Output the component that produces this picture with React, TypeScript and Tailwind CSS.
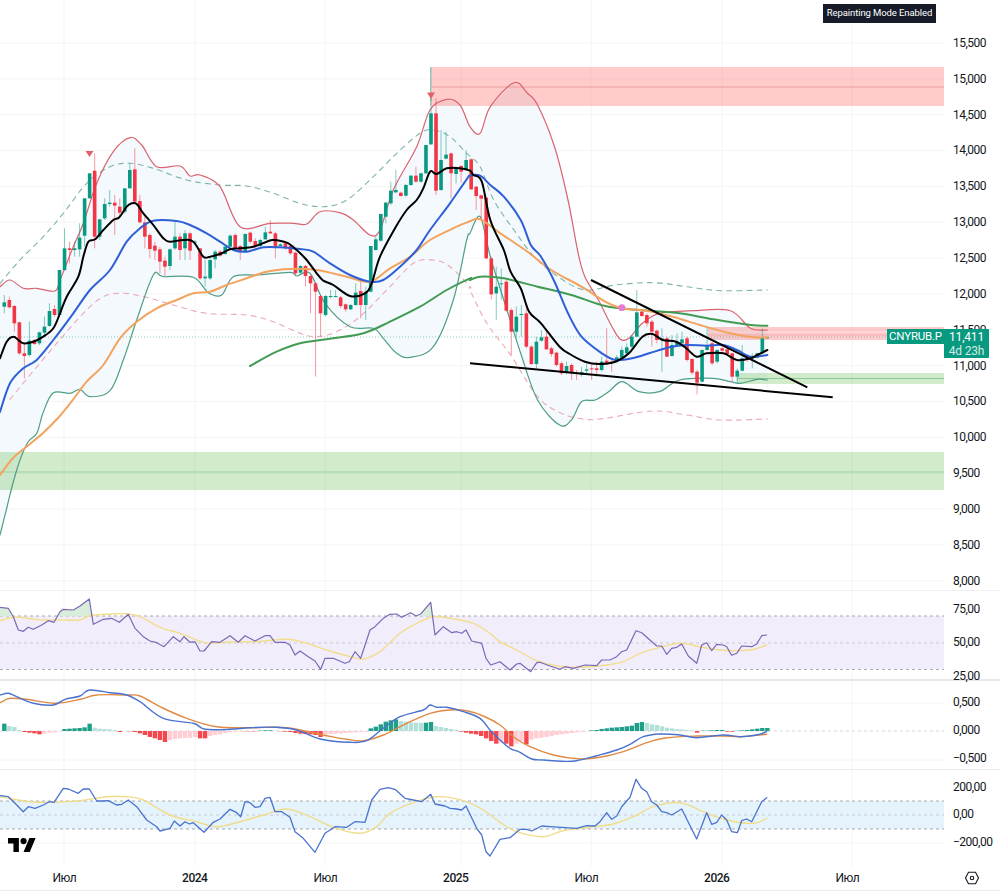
import React from "react";

type P = [number, number];
const flat = (a: number[]): P[] => {
  const r: P[] = [];
  for (let i = 0; i < a.length; i += 2) r.push([a[i], a[i + 1]]);
  return r;
};
// main pane: crop-based coordinates converted to page pixels
const z1 = (a: number[]): P[] => flat(a).map(([x, y]) => [x / 3, 60 + y / 3]);
const z2 = (a: number[]): P[] => flat(a).map(([x, y]) => [470 + x * 0.338, 60 + y / 3]);
// lower panes
const z3 = (a: number[]): P[] => flat(a).map(([x, y]) => [x / 3, 590 + y / 3]);
const z4 = (a: number[]): P[] => flat(a).map(([x, y]) => [500 + x / 3, 590 + y / 3]);
const pts = (p: P[]) => p.map(([x, y]) => `${x.toFixed(1)},${y.toFixed(1)}`).join(" ");
// smooth curve through the points (Catmull-Rom)
const curve = (p: P[]) => {
  let d = `M${p[0][0].toFixed(1)} ${p[0][1].toFixed(1)}`;
  for (let i = 0; i < p.length - 1; i++) {
    const a = p[Math.max(0, i - 1)], b = p[i], c = p[i + 1], e = p[Math.min(p.length - 1, i + 2)];
    const c1x = b[0] + (c[0] - a[0]) / 6, c1y = b[1] + (c[1] - a[1]) / 6;
    const c2x = c[0] - (e[0] - b[0]) / 6, c2y = c[1] - (e[1] - b[1]) / 6;
    d += `C${c1x.toFixed(1)} ${c1y.toFixed(1)} ${c2x.toFixed(1)} ${c2y.toFixed(1)} ${c[0].toFixed(1)} ${c[1].toFixed(1)}`;
  }
  return d;
};

const black = [...z1([0,895,20,845,40,830,55,840,70,850,100,845,130,830,160,805,180,760,200,710,235,650,250,590,265,545,285,538,310,510,340,480,358,472,380,440,395,430,410,432,430,460,460,495,490,535,510,545,550,540,580,545,610,590,630,590,660,582,690,568,720,565,760,560,800,545,820,540,860,548,890,570,920,600,950,640,970,662,1000,675,1050,708,1095,700,1115,670,1140,590,1185,505,1220,450,1250,420,1270,385,1290,335,1310,342,1340,325,1380,325,1410,332]), ...z2([10,345,35,365,60,480,100,570,120,635,150,685,175,755,210,790,265,860,300,885,340,905,380,912,430,905,470,880,510,830,540,822,570,840,610,845,640,865,670,890,700,880,750,880,790,900,830,895,850,885,880,870])];
const blue: P[] = [[0,412],...z1([30,970,70,925,110,900,160,840,220,760,270,690,330,630,380,545,420,505,460,482,530,483,570,495,620,520,660,545,700,570,740,575,790,562,840,562,900,567,940,575,990,610,1050,645,1110,665,1150,660,1200,620,1250,570,1290,510,1350,430,1400,358]), ...z2([0,347,30,347,60,375,100,410,150,480,180,555,210,590,250,665,290,760,330,830,390,880,430,900,480,895,530,880,590,862,640,855,700,857,750,855,790,870,830,890,880,885])];
const orange: P[] = [[0,475],[13,458],[25,448],[43,433],[58,418],...z1([218,1020,260,965,310,915,360,835,410,785,470,745,530,720,580,700,630,695,680,675,740,655,800,635,870,627,950,630,1040,650,1110,665,1170,625,1230,590,1290,540,1370,500,1410,484]), ...z2([0,484,30,478,90,520,170,575,240,630,330,680,400,725,450,745,520,752,600,770,680,795,770,820,840,832,880,832])];
const green = [...z1([750,918,830,875,900,850,1000,835,1090,820,1170,785,1260,740,1340,690,1410,655]), ...z2([0,660,30,650,100,655,200,680,300,705,400,738,500,750,620,760,720,778,830,795,880,797])];
const upper: P[] = [...z1([0,680,30,660,70,685,110,685,165,693,180,660,220,560,250,490,290,370,340,275,390,233,425,255,470,320,540,318,570,348,600,345,660,380,720,500,810,490,880,490,920,492,960,455,1020,458,1060,480,1110,525,1140,510,1180,390,1250,260,1290,150,1340,118,1380,135]), ...z2([0,200,30,220,60,140,130,68,170,100,200,135,250,260,290,420,320,580,340,650,380,720,420,800,445,838,470,835,510,790,560,760,660,752,770,752,830,805,880,810])];
const lower: P[] = [[0,535],[7,507],[13,483],[20,460],[28,442],[37,433],[43,413],[53,393],...z1([210,1000,240,988,270,1010,330,992,370,900,410,780,460,645,490,650,580,652,625,698,665,705,700,650,770,645,870,637,890,648,930,640,975,730,1050,800,1120,805,1150,835,1190,880,1230,892,1300,860,1360,720,1400,540]), ...z2([0,520,30,470,60,590,100,720,150,880,200,1020,265,1095,300,1080,330,1025,370,1020,410,995,450,965,500,995,560,995,620,960,720,955,770,965,800,970,850,958,880,960])];
const dashUp = [...z1([0,670,60,600,130,530,190,460,260,370,330,320,390,310,460,325,560,360,660,375,740,378,820,400,900,430,970,440,1040,420,1120,350,1190,280,1260,220,1300,210,1350,230,1400,280]), ...z2([30,320,70,420,130,510,190,590,260,650,340,690,430,675,540,668,640,680,740,692,880,690])];
const dashLow = [...z1([30,1018,90,945,170,850,250,760,310,710,370,700,440,712,520,735,620,760,740,765,820,785,900,820,950,830,1010,815,1080,770,1160,690,1240,610,1300,600,1350,620,1410,680]), ...z2([0,690,50,790,120,885,200,1010,270,1060,340,1078,400,1075,540,1053,640,1065,740,1080,880,1077])];

// top, bottom, wick top, wick bottom, green(1)/red(0); crop coordinates
const candles: number[][] = [
[727,740,705,760,1],[720,742,710,745,0],[738,790,735,815,0],[787,880,785,885,0],[880,888,850,955,0],[842,885,785,890,1],[840,852,838,855,0],[817,850,815,855,1],[800,818,770,825,1],[753,798,730,800,1],
[747,765,735,770,0],[630,765,630,770,1],[565,630,505,632,1],[565,570,545,610,0],[565,570,545,590,1],[533,568,490,590,1],[415,527,415,560,1],[340,415,340,415,1],[332,530,280,565,0],[478,530,478,540,1],
[432,475,415,480,1],[428,432,390,440,1],[428,437,405,525,0],[440,458,415,470,0],[385,455,385,460,1],[330,385,310,385,1],[328,425,265,430,0],[423,487,405,490,0],[487,530,470,565,0],[525,567,520,595,0],
[557,572,545,600,0],[568,605,560,640,0],[602,620,590,648,0],[568,618,565,630,1],[530,565,480,570,1],[530,570,520,600,0],[520,565,510,600,1],[520,572,515,600,0],[545,548,540,552,1],[565,655,565,660,0],
[650,655,600,680,1],[600,655,590,660,1],[575,598,570,625,1],[575,587,570,590,0],[560,582,555,585,1],[527,560,523,565,1],[525,565,520,570,0],[558,575,555,600,0],[522,573,520,575,1],[518,545,515,550,0],
[543,558,535,565,0],[540,558,535,562,1],[517,538,500,540,1],[515,520,480,522,0],[520,560,515,595,0],[553,558,550,560,1],[550,562,548,570,0],[558,580,555,585,0],[578,640,575,645,0],[618,638,615,645,1],
[618,648,615,680,0],[648,670,645,760,0],[670,695,668,950,0],[708,760,705,830,0],[708,765,705,770,1],[708,711,690,715,1],[708,710,690,712,1],[712,738,708,745,0],[733,748,730,755,0],[735,748,732,750,1],
[698,735,670,738,1],[693,735,665,775,0],[695,735,680,780,1],[558,695,558,697,1],[538,570,530,572,1],[462,542,460,545,1],[428,470,425,490,1],[392,430,365,435,1],[390,397,330,400,1],[398,408,395,410,0],
[375,407,372,410,1],[347,375,345,378,1],[347,365,320,368,0],[340,365,338,368,1],[255,340,255,342,1],[160,253,115,255,1],[160,392,115,405,0],[300,390,210,392,1],[284,296,215,298,1],[280,340,278,415,0],
[322,342,320,370,1],[318,335,315,368,0],[300,330,270,332,1],[298,388,295,390,0],[380,408,378,450,0],[406,416,404,480,0],[413,595,411,598,0],[595,703,590,718,0],[680,700,620,780,1],[670,672,625,720,1],
[665,752,660,755,0],[750,815,745,885,0],[770,815,740,830,1],[762,765,735,830,1],[760,860,735,865,0],[860,912,855,915,0],[845,912,830,925,1],[832,842,810,845,1],[830,868,810,870,0],[865,882,860,890,0],
[878,915,875,920,0],[910,940,905,945,0],[918,938,905,942,1],[915,938,910,960,0],[938,942,930,960,0],[936,945,920,950,1],[928,932,910,945,1],[925,928,915,960,0],[925,930,905,950,0],[905,930,890,935,1],
[902,908,805,915,0],[905,910,895,935,0],[892,905,885,910,1],[870,893,860,895,1],[862,880,850,885,1],[830,860,825,865,1],[757,830,690,830,1],[755,768,750,770,0],[765,790,760,800,0],[785,815,780,860,0],
[812,840,808,850,0],[835,838,805,935,1],[835,890,830,892,0],[855,888,825,890,1],[845,855,820,860,1],[838,850,815,852,1],[835,900,830,905,0],[897,938,895,945,0],[935,968,930,1003,0],[870,965,868,968,1],
[855,870,800,872,1],[850,910,845,915,0],[870,905,868,910,1],[865,872,855,875,0],[868,882,862,885,0],[880,950,878,965,0],[932,950,925,970,1],[895,932,855,935,1],[892,900,888,905,0],[892,895,880,925,1],
[880,893,878,895,1],[833,880,805,882,1],[832,834,830,836,1],
];
const barX = (i: number) => 4.3 + 5.02 * i;
const zy = (v: number) => 60 + v / 3;

const rsi = [...z3([0,52,25,55,40,80,55,120,70,124,85,112,100,118,125,105,145,92,162,97,180,65,190,58,220,60,240,48,268,27,280,103,310,88,335,85,358,97,385,73,405,115,430,140,450,153,470,158,492,170,520,140,540,155,552,140,570,157,585,155,600,183,612,183,635,155,660,157,690,137,715,157,735,137,765,153,795,137,810,137,825,157,855,157,870,165,885,195,900,183,925,200,945,213,962,238,975,205,1000,205,1035,220,1048,215,1065,185,1082,205,1110,120,1125,110,1150,85,1170,73,1190,72,1205,82,1232,68,1248,78,1262,72,1292,37,1305,135,1330,110,1355,128,1370,125,1385,130,1398,120,1415,153,1445,160,1458,205,1472,225]), ...z4([0,215,30,240,50,222,60,220,92,245,110,218,120,217,150,228,180,238,195,230,220,235,255,225,290,227,305,210,330,210,350,200,365,185,380,180,408,122,425,128,470,168,485,168,500,193,515,175,530,172,545,162,565,198,590,220,605,165,620,158,635,182,650,163,670,165,680,170,695,196,710,190,725,168,755,170,770,162,785,137,800,135])];
const rsiMa = [...z3([0,92,30,83,60,82,100,87,130,90,200,90,240,90,270,77,320,73,380,71,420,80,480,112,540,130,590,150,630,160,700,155,770,155,860,148,920,160,980,180,1040,197,1090,207,1140,185,1200,130,1250,100,1300,80,1350,85,1420,100,1470,130]), ...z4([0,155,50,180,110,212,170,228,240,232,320,225,370,215,420,190,470,175,540,160,600,170,660,180,750,180,800,165])];
const macd = [...z3([0,315,25,310,50,320,100,340,160,345,195,328,240,318,268,300,330,308,380,315,420,335,490,385,580,400,615,418,690,418,750,413,830,412,890,420,960,447,1050,457,1100,452,1150,415,1200,380,1270,360,1290,345,1310,352,1340,352,1390,365,1440,385,1470,420]), ...z4([0,450,30,475,60,487,95,507,130,510,190,514,230,512,290,497,350,480,390,463,430,440,480,432,540,435,590,443,670,435,720,440,770,435,800,425])];
const signal = [...z3([0,338,30,325,80,328,165,340,240,328,290,315,380,315,420,318,480,350,560,385,650,410,760,413,860,413,970,435,1040,448,1090,452,1150,435,1220,400,1290,370,1350,360,1400,362,1450,378]), ...z4([0,405,40,440,90,470,160,495,240,507,300,502,370,485,440,458,500,443,590,438,670,438,720,440,800,433])];
const hist = [22,15,12,3,-3,-5,-7,-10,-7,-5,-4,-1,6,7,8,9,11,22,10,7,6,5,3,-3,-1,-1,-3,-7,-12,-18,-22,-27,-33,-28,-24,-22,-21,-20,-18,-22,-22,-15,-12,-10,-6,-3,-2,-1,-1,-1,-1,1,2,2,1,-1,-2,-3,-6,-8,-9,-10,-12,-18,-10,-9,-8,-7,-6,-5,-4,-3,-2,8,13,20,28,32,35,30,28,26,25,24,25,27,15,12,9,6,3,-2,-5,-8,-10,-15,-22,-30,-38,-35,-38,-46,-38,-30,-40,-26,-22,-20,-18,-15,-12,-10,-8,-6,-4,-2,-1,2,3,6,8,10,11,12,14,16,24,27,24,20,18,14,10,8,6,5,3,2,-5,1,1,2,3,3,-2,-2,1,2,3,5,7,9,9];
const cci = [...z3([0,617,25,620,45,640,70,665,85,650,105,655,130,645,148,635,162,637,190,595,205,597,235,610,250,597,268,597,290,633,310,633,325,632,350,645,365,643,385,630,410,650,440,690,470,710,480,723,510,715,523,693,540,708,555,695,568,702,580,698,612,727,640,697,660,687,690,658,710,668,722,680,735,635,750,638,765,652,780,650,795,625,810,622,825,665,845,665,870,682,885,725,910,745,945,787,975,730,1005,710,1040,712,1065,695,1095,697,1115,630,1140,598,1165,593,1185,598,1215,625,1240,630,1265,635,1292,613,1305,642,1335,648,1350,655,1370,657,1385,660,1398,648,1430,715,1445,735,1458,785,1470,798]), ...z4([0,748,30,743,60,718,80,718,95,723,125,708,150,710,195,713,230,715,260,707,285,708,300,695,320,668,335,688,350,678,365,650,390,622,408,568,425,595,440,605,455,635,470,645,485,665,500,668,515,675,545,657,590,747,620,668,635,703,650,697,665,675,680,690,695,725,712,728,725,692,740,687,755,695,785,635,800,623])];
const cciMa = [...z3([0,620,40,628,90,635,150,637,240,632,320,620,380,620,430,630,510,675,590,695,650,710,720,695,790,675,860,657,930,680,1000,712,1080,730,1130,710,1170,670,1240,638,1310,620,1390,632,1450,660]), ...z4([0,697,50,725,130,740,190,722,270,712,340,702,400,680,460,650,540,638,610,665,680,690,760,700,800,685])];

const vGrid = [64, 195, 325, 461, 591, 722, 852];
const prices = ["15,500","15,000","14,500","14,000","13,500","13,000","12,500","12,000","11,500","11,000","10,500","10,000","9,500","9,000","8,500","8,000"];
const months: [string, boolean][] = [["Июл",false],["2024",true],["Июл",false],["2025",true],["Июл",false],["2026",true],["Июл",false]];

const Line = ({ p, c, w = 1, dash, op }: { p: P[]; c: string; w?: number; dash?: string; op?: number }) => (
  <polyline points={pts(p)} fill="none" stroke={c} strokeWidth={w} strokeDasharray={dash} strokeOpacity={op} strokeLinejoin="round" strokeLinecap="round" />
);
const Curve = ({ p, c, w = 1, dash }: { p: P[]; c: string; w?: number; dash?: string }) => (
  <path d={curve(p)} fill="none" stroke={c} strokeWidth={w} strokeDasharray={dash} strokeLinejoin="round" strokeLinecap="round" />
);
const VGrid = ({ y1, y2 }: { y1: number; y2: number }) => (
  <>{vGrid.map((x) => <line key={x} x1={x} x2={x} y1={y1} y2={y2} stroke="#f3f4f5" />)}</>
);
const HLine = ({ y, c = "#f3f4f5", dash }: { y: number; c?: string; dash?: string }) => (
  <line x1={0} x2={944} y1={y} y2={y} stroke={c} strokeDasharray={dash} />
);
const Axis = ({ labels, h, top }: { labels: string[]; h: string; top: string }) => (
  <div className={`w-[56px] shrink-0 flex flex-col ${top}`}>
    {labels.map((l, i) => (
      <div key={i} className={`${h} shrink-0 flex items-center pl-[9px] whitespace-nowrap`}>{l}</div>
    ))}
  </div>
);

export default function App() {
  return (
    <div className="relative w-[1000px] h-[891px] flex flex-col bg-white overflow-hidden text-[#131722] text-[12px] tracking-[-0.5px] font-['Roboto',sans-serif]">
      {/* main pane */}
      <div className="flex h-[591px] shrink-0 border-b border-[#f0f0f0]">
        <svg className="w-[944px] h-full shrink-0 block" viewBox="0 0 944 590">
          <VGrid y1={0} y2={590} />
          {prices.map((_, i) => <HLine key={i} y={43 + i * 35.85} />)}
          <polygon points={pts([...upper, ...[...lower].reverse()])} fill="#f3f9fd" />
          <rect x={430} y={67} width={514} height={39} fill="#ff5252" fillOpacity={0.3} />
          <line x1={430} x2={944} y1={87} y2={87} stroke="#e58f8f" strokeOpacity={0.7} />
          <rect x={430} y={67} width={1.5} height={34} fill="#8fc7ae" />
          <rect x={708} y={327} width={236} height={13} fill="#ff5252" fillOpacity={0.3} />
          <line x1={708} x2={944} y1={332} y2={332} stroke="#fff" strokeOpacity={0.35} />
          <line x1={708} x2={944} y1={335} y2={335} stroke="#e58f8f" strokeOpacity={0.5} />
          <rect x={737} y={373} width={207} height={11} fill="#4caf30" fillOpacity={0.25} />
          <line x1={737} x2={944} y1={378.5} y2={378.5} stroke="#6fb87a" strokeOpacity={0.7} />
          <rect x={0} y={452} width={944} height={38} fill="#4caf30" fillOpacity={0.25} />
          <line x1={0} x2={944} y1={472} y2={472} stroke="#8cc68f" strokeOpacity={0.7} />
          <line x1={0} x2={887} y1={337} y2={337} stroke="#089981" strokeOpacity={0.45} strokeDasharray="1 2" />
          <Curve p={dashUp} c="#7fb5a5" dash="5 5" w={1.1} />
          <Curve p={dashLow} c="#eaa9b3" dash="5 5" w={1.1} />
          <Curve p={upper} c="#d9646f" w={1.2} />
          <Curve p={lower} c="#4f9e86" w={1.2} />
          {candles.map((c, i) => {
            const x = barX(i);
            const col = c[4] ? "#089981" : "#f23645";
            return (
              <g key={i}>
                <line x1={x} x2={x} y1={zy(c[2])} y2={zy(c[3])} stroke={col} strokeOpacity={0.5} />
                <rect x={x - 1.8} y={zy(c[0])} width={3.6} height={Math.max(1, (c[1] - c[0]) / 3)} fill={col} />
              </g>
            );
          })}
          <Curve p={green} c="#429b52" w={2} />
          <Curve p={orange} c="#f3a35e" w={2} />
          <Curve p={blue} c="#2f5fd6" w={2} />
          <Curve p={black} c="#000" w={2} />
          <line x1={591} y1={280} x2={807.3} y2={387.3} stroke="#000" strokeWidth={2} />
          <line x1={470} y1={363.3} x2={832.7} y2={397.3} stroke="#000" strokeWidth={2} />
          <polygon points="85.5,151 93.5,151 89.5,157" fill="#e0606a" />
          <polygon points="427,92.5 435,92.5 431,99" fill="#e0606a" />
          <circle cx={621.8} cy={307.7} r={3.4} fill="#e67ad5" />
        </svg>
        <Axis labels={prices} h="h-[35.85px]" top="pt-[25px]" />
      </div>

      {/* RSI */}
      <div className="flex h-[90px] shrink-0 border-b-2 border-[#e8e8ea]">
        <svg className="w-[944px] h-full shrink-0 block" viewBox="0 591 944 88">
          <VGrid y1={591} y2={680} />
          <rect x={0} y={616} width={944} height={53} fill="#f1edfa" />
          <HLine y={616} c="#a8a8ad" dash="3 3" />
          <HLine y={643} c="#c9c9cf" dash="3 3" />
          <HLine y={669.5} c="#a8a8ad" dash="3 3" />
          <polygon points={pts(z3([0,79,0,52,25,55,38,79]))} fill="#d8eedb" />
          <polygon points={pts(z3([170,79,180,65,190,58,220,60,240,48,268,27,275,79]))} fill="#d8eedb" />
          <polygon points={pts(z3([1262,79,1292,37,1298,79]))} fill="#d8eedb" />
          <Curve p={rsiMa} c="#f2dd8f" w={1.4} />
          <Line p={rsi} c="#7a68b8" w={1.2} />
        </svg>
        <Axis labels={["75,00","50,00","25,00"]} h="h-[33.5px]" top="pt-[1px]" />
      </div>

      {/* MACD */}
      <div className="flex h-[89px] shrink-0 border-b border-[#ececee]">
        <svg className="w-[944px] h-full shrink-0 block" viewBox="0 681 944 88">
          <VGrid y1={681} y2={770} />
          <HLine y={703} />
          <HLine y={731} c="#d8d8dc" dash="3 3" />
          <HLine y={760} />
          {hist.map((v, i) => {
            const prev = i ? hist[i - 1] : 0;
            const col = v >= 0 ? (v >= prev ? "#1f9e8a" : "#b5e0da") : v <= prev ? "#f5484d" : "#ffcdd2";
            const h = Math.abs(v) / 3;
            return <rect key={i} x={barX(i) - 2.2} y={v >= 0 ? 731 - h : 731} width={4.4} height={h} fill={col} />;
          })}
          <Curve p={signal} c="#e08a45" w={1.4} />
          <Curve p={macd} c="#4a72cf" w={1.4} />
        </svg>
        <Axis labels={["0,500","0,000","−0,500"]} h="h-[28px]" top="pt-[7px]" />
      </div>

      {/* CCI */}
      <div className="flex h-[96px] shrink-0">
        <svg className="w-[944px] h-full shrink-0 block" viewBox="0 770 944 96">
          <VGrid y1={770} y2={866} />
          <rect x={0} y={801} width={944} height={28} fill="#e5f3fc" />
          <HLine y={801} c="#a8a8ad" dash="3 3" />
          <HLine y={815} c="#c9c9cf" dash="3 3" />
          <HLine y={829} c="#a8a8ad" dash="3 3" />
          <HLine y={843} />
          <Curve p={cciMa} c="#f0dc8a" w={1.4} />
          <Line p={cci} c="#4a72cf" w={1.3} />
        </svg>
        <Axis labels={["200,00","0,00","−200,00"]} h="h-[27.5px]" top="pt-[3px]" />
      </div>

      {/* time axis */}
      <div className="flex h-[25px] shrink-0 border-b border-[#ececee]">
        <div className="w-[944px] shrink-0 flex items-center ml-[-1px]">
          {months.map(([m, bold], i) => (
            <div key={i} className={`w-[130.5px] shrink-0 text-center ${bold ? "font-medium" : ""}`}>{m}</div>
          ))}
        </div>
        <div className="flex-1 flex items-center justify-center">
          <svg className="w-[16px] h-[14px]" viewBox="0 0 16 14" fill="none" stroke="#131722" strokeWidth="1.1">
            <polygon points="1.5,7 4.5,1.2 11.5,1.2 14.5,7 11.5,12.8 4.5,12.8" />
            <circle cx="8" cy="7" r="1.7" />
          </svg>
        </div>
      </div>

      {/* overlays */}
      <div className="absolute left-[823px] top-[4px] w-[113px] h-[19px] bg-[#171b29] text-white text-[9.5px] tracking-[-0.1px] flex items-center justify-center whitespace-nowrap">Repainting Mode Enabled</div>
      <div className="absolute left-[887px] top-[329px] w-[57px] h-[15px] bg-[#089981] text-white flex items-center justify-center tracking-[-0.2px] text-[11.5px] whitespace-nowrap">CNYRUB.P</div>
      <div className="absolute left-[944px] top-[329px] w-[45px] h-[29px] bg-[#089981] text-white flex flex-col items-center justify-center leading-[14px] tracking-[-0.2px] rounded-r-[1px]">
        <span>11,411</span>
        <span className="opacity-80">4d 23h</span>
      </div>
      <svg className="absolute left-[8px] top-[838px] w-[28px] h-[14px]" viewBox="0 4 36 18" fill="#000">
        <path d="M14 22H7V11H0V4h14v18zM28 22h-8l7.5-18h8L28 22z" />
        <circle cx="20" cy="8" r="4" />
      </svg>
    </div>
  );
}
